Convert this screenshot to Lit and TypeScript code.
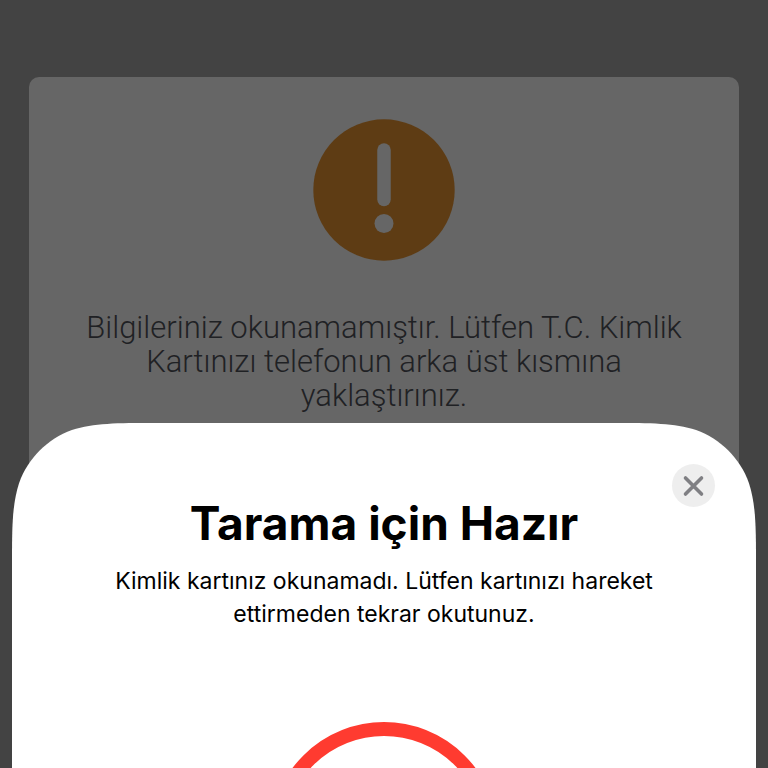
import { LitElement, html, css, svg } from "lit";
import { customElement } from "lit/decorators.js";

// Continuous-curvature corner, drawn in the unit space of its radius.
const corner = svg`<path d="M0 1.528665C0 1.088493 0 .868407 .074911 .631494C.16906 .372824 .372824 .16906 .631494 .074911C.868407 0 1.088493 0 1.528665 0V1.528665Z" fill="#fff"/>`;

@customElement("app-root")
export class AppRoot extends LitElement {
  static styles = css`
    :host {
      display: block;
      position: relative;
      min-height: 100vh;
      box-sizing: border-box;
      padding: 77px 29px 0;
      overflow: hidden;
      background: #434343;
      font-family: Inter, "Liberation Sans", sans-serif;
    }
    .card {
      display: flex;
      flex-direction: column;
      align-items: center;
      gap: 50px;
      min-height: 100vh;
      margin-bottom: -77px;
      box-sizing: border-box;
      padding: 42px 40px;
      border-radius: 10px;
      background: #666;
    }
    .warning {
      display: block;
      width: 142px;
      height: 142px;
    }
    .message {
      margin: 0;
      color: #1f2124;
      font-family: Roboto, sans-serif;
      font-weight: 300;
      font-size: 31px;
      line-height: 34px;
      text-align: center;
    }
    .sheet {
      position: absolute;
      top: 423px;
      left: 12px;
      right: 12px;
      bottom: 0;
      overflow: hidden;
    }
    .shape {
      position: absolute;
      inset: 0;
      display: grid;
      grid-template: 145px 1fr / 145px 1fr 145px;
    }
    .corner {
      display: block;
      width: 145px;
      height: 145px;
    }
    .right {
      transform: scaleX(-1);
    }
    .fill {
      background: #fff;
    }
    .base {
      grid-column: 1 / -1;
    }
    .content {
      position: relative;
      display: flex;
      flex-direction: column;
      align-items: center;
      padding: 72px 40px 0;
      color: #000;
      text-align: center;
    }
    .title {
      margin: 0;
      font-size: 46px;
      line-height: 56px;
      font-weight: 700;
    }
    .hint {
      margin: 14px 0 0;
      font-size: 23px;
      line-height: 33px;
    }
    .ring {
      display: block;
      flex: none;
      width: 228px;
      height: 228px;
      margin-top: 91px;
    }
    .close {
      position: absolute;
      top: 41px;
      right: 41px;
      width: 43px;
      height: 43px;
      padding: 0;
      border: 0;
      border-radius: 50%;
      background: #eee;
      color: #7f7f83;
      cursor: pointer;
    }
    .cross {
      display: block;
      width: 43px;
      height: 43px;
    }
  `;

  render() {
    return html`
      <main class="card">
        <svg class="warning" viewBox="0 0 142 142" aria-hidden="true">
          <circle cx="71" cy="71" r="70.7" fill="#5e3c14" />
          <path d="M71 31V80.500" stroke="#666" stroke-width="13.500" stroke-linecap="round" />
          <circle cx="71" cy="104.500" r="9.500" fill="#666" />
        </svg>
        <p class="message">
          Bilgileriniz okunamamıştır. Lütfen T.C. Kimlik<br />
          Kartınızı telefonun arka üst kısmına<br />
          yaklaştırınız.
        </p>
      </main>
      <section class="sheet" role="dialog" aria-labelledby="title">
        <div class="shape">
          <svg class="corner" viewBox="0 0 1.528665 1.528665">${corner}</svg>
          <div class="fill"></div>
          <svg class="corner right" viewBox="0 0 1.528665 1.528665">${corner}</svg>
          <div class="fill base"></div>
        </div>
        <div class="content">
          <h1 class="title" id="title">Tarama için Hazır</h1>
          <p class="hint">
            Kimlik kartınız okunamadı. Lütfen kartınızı hareket<br />
            ettirmeden tekrar okutunuz.
          </p>
          <svg class="ring" viewBox="0 0 228 228" aria-hidden="true">
            <circle cx="114" cy="114" r="107" fill="none" stroke="#ff3b30" stroke-width="14" />
          </svg>
        </div>
        <button class="close" type="button" aria-label="Kapat">
          <svg class="cross" viewBox="0 0 43 43" aria-hidden="true">
            <path d="M13.500 14L29.500 30M29.500 14L13.500 30" fill="none" stroke="currentColor" stroke-width="3.600" stroke-linecap="round" />
          </svg>
        </button>
      </section>
    `;
  }
}
